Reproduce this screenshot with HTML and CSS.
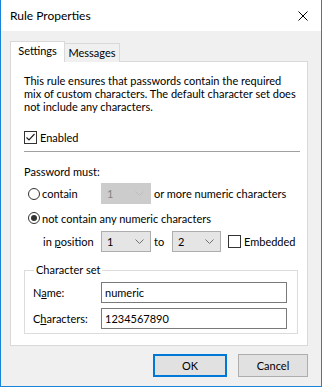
FILE: index.html
```html
<!DOCTYPE html>
<html lang="en">

<head>
    <meta charset="UTF-8">
    <meta name="viewport" content="width=device-width, initial-scale=1.0">
    <title>Rule Properties</title>
    <link rel="stylesheet" href="styles.css">
</head>

<body>

    <div class="window">
        <div class="titlebar">
            <span class="title">Rule Properties</span>
            <svg class="close" width="10" height="10" viewBox="0 0 10 10">
                <path d="M0.5 0.5L9.5 9.5M9.5 0.5L0.5 9.5" stroke="#000" stroke-width="1" fill="none" />
            </svg>
        </div>

        <div class="content">
            <div class="tabs">
                <div class="tab active">Settings</div>
                <div class="tab">Messages</div>
            </div>

            <div class="panel">
                <p class="intro">This rule ensures that passwords contain the required<br>mix of custom characters. The default character set does<br>not include any characters.</p>

                <div class="check-row">
                    <span class="checkbox">
                        <svg width="11" height="11" viewBox="0 0 11 11">
                            <path d="M1.5 5.5L4 8L9.5 2" stroke="#222" stroke-width="1.2" fill="none" />
                        </svg>
                    </span>
                    <span>Enabled</span>
                </div>

                <div class="separator"></div>

                <div class="label-row">Password must:</div>

                <div class="radio-row tall">
                    <span class="radio"></span>
                    <span class="radio-text">contain</span>
                    <div class="combo disabled">
                        <span>1</span>
                        <svg width="9" height="5" viewBox="0 0 9 5">
                            <path d="M0.5 0.5L4.5 4.5L8.5 0.5" stroke="#bdbdbd" stroke-width="1" fill="none" />
                        </svg>
                    </div>
                    <span class="after-combo">or more numeric characters</span>
                </div>

                <div class="radio-row">
                    <span class="radio selected"></span>
                    <span>not contain any numeric characters</span>
                </div>

                <div class="position-row">
                    <span class="pos-label">in <u>p</u>osition</span>
                    <div class="combo">
                        <span>1</span>
                        <svg width="9" height="5" viewBox="0 0 9 5">
                            <path d="M0.5 0.5L4.5 4.5L8.5 0.5" stroke="#707070" stroke-width="1" fill="none" />
                        </svg>
                    </div>
                    <span class="to">to</span>
                    <div class="combo second">
                        <span>2</span>
                        <svg width="9" height="5" viewBox="0 0 9 5">
                            <path d="M0.5 0.5L4.5 4.5L8.5 0.5" stroke="#707070" stroke-width="1" fill="none" />
                        </svg>
                    </div>
                    <span class="checkbox embedded"></span>
                    <span>Embedded</span>
                </div>

                <fieldset class="charset">
                    <legend>Character set</legend>
                    <div class="field-row">
                        <span class="field-label">N<u>a</u>me:</span>
                        <div class="textbox">numeric</div>
                    </div>
                    <div class="field-row">
                        <span class="field-label">C<u>h</u>aracters:</span>
                        <div class="textbox">1234567890</div>
                    </div>
                </fieldset>
            </div>

            <div class="buttons">
                <button class="btn default">OK</button>
                <button class="btn cancel">Cancel</button>
            </div>
        </div>
    </div>

</body>

</html>
```

FILE: styles.css
```css
body {
    margin: 0;
    padding: 0;
    font-family: Lato, "Noto Sans", sans-serif;
    font-size: 11px;
    color: #000;
    background-color: #f0f0f0;
}

.window {
    width: 322px;
    height: 387px;
    box-sizing: border-box;
    border: 1px solid #1883d7;
    border-top: none;
    background-color: #f0f0f0;
    display: flex;
    flex-direction: column;
}

.titlebar {
    height: 31px;
    background-color: #fff;
    display: flex;
    align-items: center;
    justify-content: space-between;
    padding: 0 13px 0 9px;
}

.title {
    font-size: 12px;
    line-height: 16px;
}

.content {
    padding: 10px 13px 0 9px;
}

.tabs {
    display: flex;
    align-items: flex-end;
    height: 21px;
    margin-bottom: -1px;
}

.tab {
    box-sizing: border-box;
    height: 19px;
    width: 56px;
    border: 1px solid #d9d9d9;
    border-bottom: none;
    background-color: #f0f0f0;
    line-height: 17px;
    text-align: center;
    margin-left: -1px;
}

.tab.active {
    position: relative;
    z-index: 1;
    height: 21px;
    width: 55px;
    margin-left: 0;
    background-color: #fff;
    line-height: 18px;
}

.panel {
    box-sizing: border-box;
    width: 298px;
    height: 285px;
    border: 1px solid #d9d9d9;
    background-color: #fff;
    padding: 0 7px 0 13px;
}

.intro {
    margin: 12px 0 0 0;
    line-height: 13px;
    white-space: nowrap;
}

.check-row {
    margin-top: 17px;
    height: 15px;
    display: flex;
    align-items: center;
}

.checkbox {
    box-sizing: border-box;
    width: 13px;
    height: 13px;
    border: 1px solid #333;
    background-color: #fff;
    display: flex;
    align-items: center;
    justify-content: center;
    margin-right: 3px;
}

.separator {
    margin-top: 6px;
    height: 1px;
    background-color: #a0a0a0;
}

.label-row {
    margin-top: 12px;
    line-height: 16px;
}

.radio-row {
    margin-top: 6px;
    height: 16px;
    display: flex;
    align-items: center;
    padding-left: 4px;
}

.radio-row.tall {
    margin-top: 3px;
    height: 21px;
}

.radio {
    box-sizing: border-box;
    width: 12px;
    height: 12px;
    border: 1px solid #333;
    border-radius: 50%;
    background-color: #fff;
    margin-right: 2px;
    display: flex;
    align-items: center;
    justify-content: center;
}

.radio.selected::after {
    content: "";
    width: 6px;
    height: 6px;
    border-radius: 50%;
    background-color: #333;
}

.radio-text {
    width: 59px;
}

.combo {
    box-sizing: border-box;
    width: 50px;
    height: 21px;
    border: 1px solid #adadad;
    background-color: #e5e5e5;
    display: flex;
    align-items: center;
    justify-content: space-between;
    padding: 0 6px 0 5px;
}

.combo.disabled {
    border-color: #cccccc;
    background-color: #cccccc;
    color: #838383;
}

.combo.second {
    width: 49px;
}

.after-combo {
    margin-left: 3px;
}

.position-row {
    margin-top: 5px;
    height: 21px;
    display: flex;
    align-items: center;
    padding-left: 19px;
}

.pos-label {
    width: 58px;
}

.to {
    width: 18px;
    margin-left: 3px;
}

.checkbox.embedded {
    margin-left: 7px;
}

.charset {
    box-sizing: border-box;
    width: 274px;
    min-width: 0;
    margin: 10px 0 0 0;
    padding: 4px 10px 4px 8px;
    border: 1px solid #dcdcdc;
}

.charset legend {
    padding: 0 2px;
    margin-left: 1px;
    line-height: 16px;
}

.field-row {
    display: flex;
    align-items: center;
    height: 21px;
}

.field-row + .field-row {
    margin-top: 5px;
}

.field-label {
    width: 68px;
}

.textbox {
    box-sizing: border-box;
    width: 186px;
    height: 21px;
    border: 1px solid #7a7a7a;
    background-color: #fff;
    padding: 0 3px;
    line-height: 19px;
}

.buttons {
    margin-top: 8px;
    display: flex;
    justify-content: flex-end;
    gap: 11px;
}

.btn {
    box-sizing: border-box;
    height: 23px;
    padding: 0;
    font-family: inherit;
    font-size: 11px;
    color: #000;
    background-color: #e1e1e1;
    border: 1px solid #adadad;
}

.btn.default {
    width: 74px;
    border: 2px solid #0078d7;
}

.btn.cancel {
    width: 70px;
}
```
